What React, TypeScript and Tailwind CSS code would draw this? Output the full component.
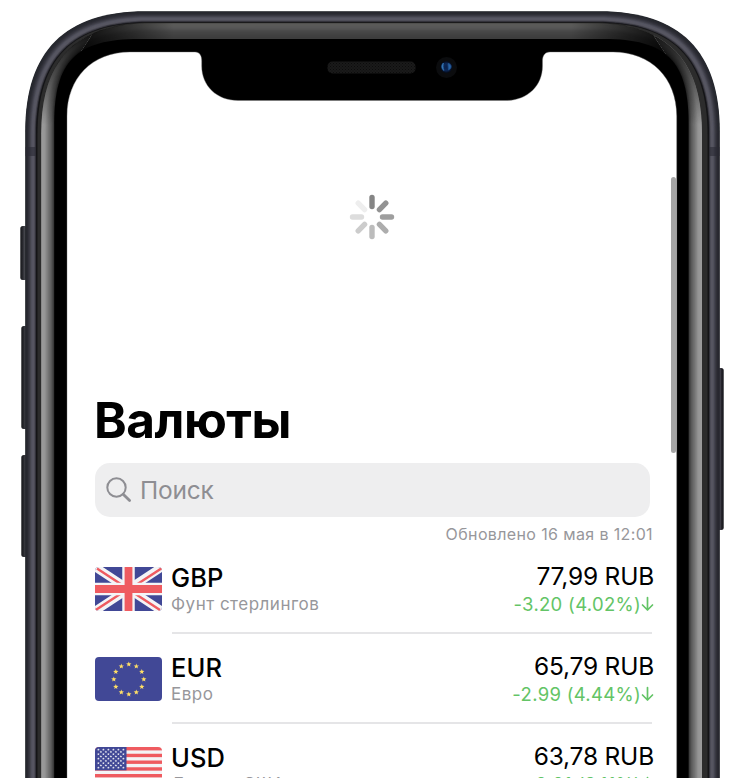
import React from "react";

type Stop = [number, number, number];

// Phone silhouette running off the bottom edge, with continuous-curvature corners.
function shell(l: number, t: number, r: number, d: number, k: number) {
  return `M${l} 800V${t + d}C${l} ${t + k} ${l + k} ${t} ${l + d} ${t}H${r - d}C${r - k} ${t} ${r} ${t + k} ${r} ${t + d}V800Z`;
}

function mix(stops: Stop[], at: number) {
  const pos = at * (stops.length - 1);
  const i = Math.min(Math.floor(pos), stops.length - 2);
  const f = pos - i;
  return `rgb(${stops[i].map((v, n) => Math.round(v + (stops[i + 1][n] - v) * f)).join(",")})`;
}

const metal: Stop[] = [[38, 40, 46], [42, 43, 50], [60, 60, 70], [86, 86, 98], [88, 87, 98], [30, 30, 36]];
const sideGlass: Stop[] = [[156, 156, 156], [150, 150, 150], [120, 120, 120], [92, 92, 92], [45, 45, 45]];
const topGlass: Stop[] = [[92, 92, 90], [88, 88, 88], [72, 72, 72], [64, 64, 64], [60, 60, 60]];

function Frame() {
  const rim = Array.from({ length: 22 }, (_, i) => i / 21);
  return (
    <svg className="absolute inset-0" width="740" height="778" viewBox="0 0 740 778" fill="none">
      <defs>
        <linearGradient id="btnL" x1="0" x2="1"><stop offset="0" stopColor="#17181b" /><stop offset=".3" stopColor="#25262b" /><stop offset=".65" stopColor="#484950" /><stop offset="1" stopColor="#1b1c21" /></linearGradient>
        <linearGradient id="btnR" x1="1" x2="0"><stop offset="0" stopColor="#15151a" /><stop offset=".3" stopColor="#24232a" /><stop offset=".6" stopColor="#55535f" /><stop offset="1" stopColor="#1b1c21" /></linearGradient>
        <linearGradient id="sideFade" gradientUnits="userSpaceOnUse" x1="0" y1="36" x2="0" y2="125"><stop offset="0" stopColor="#000" stopOpacity=".85" /><stop offset=".45" stopColor="#000" stopOpacity=".5" /><stop offset="1" stopColor="#000" stopOpacity="0" /></linearGradient>
        <linearGradient id="topFade" gradientUnits="userSpaceOnUse" x1="80" y1="0" x2="665" y2="0"><stop offset="0" stopColor="#000" stopOpacity=".9" /><stop offset=".05" stopColor="#000" stopOpacity=".62" /><stop offset=".16" stopColor="#000" stopOpacity="0" /><stop offset=".84" stopColor="#000" stopOpacity="0" /><stop offset=".95" stopColor="#000" stopOpacity=".62" /><stop offset="1" stopColor="#000" stopOpacity=".9" /></linearGradient>
        <clipPath id="sides"><path d="M0 0H110L90 38L66 75V800H0ZM740 0H635L655 38L679 75V800H740Z" /></clipPath>
        <clipPath id="top"><path d="M110 0L90 38L66 75H679L655 38L635 0Z" /></clipPath>
        <radialGradient id="lens"><stop offset="0" stopColor="#0a1f4a" /><stop offset=".55" stopColor="#0c2858" /><stop offset="1" stopColor="#050a18" /></radialGradient>
        <pattern id="mesh" width="3" height="3" patternUnits="userSpaceOnUse"><rect width="3" height="3" fill="#1a1a1a" /><rect width="1" height="1" fill="#0c0c0c" /><rect x="1.5" y="1.5" width="1" height="1" fill="#0c0c0c" /></pattern>
      </defs>
      <rect x="20.3" y="226" width="7" height="54" rx="2.5" fill="url(#btnL)" />
      <rect x="21.3" y="326" width="7" height="103" rx="2.5" fill="url(#btnL)" />
      <rect x="21.3" y="455" width="7" height="102" rx="2.5" fill="url(#btnL)" />
      <rect x="716.5" y="368" width="7.2" height="162" rx="2.5" fill="url(#btnR)" />
      {rim.map((f) => (
        <path key={f} d={shell(25.2 + f * 10.8, 11.3 + f * 10.8, 719.8 - f * 10.8, 120 - f * 6, 40 - f * 4)} fill={mix(metal, f)} />
      ))}
      <path d="M25.4 147h10.4v9H25.4zM709 147h10.6v9H709z" fill="#292a33" opacity=".6" />
      <path d={shell(36, 22, 709, 114, 36)} fill="#141416" />
      <path d={shell(37.5, 22.8, 707.5, 112, 35)} fill="#2c2c2c" />
      <g clipPath="url(#sides)">
        {rim.map((f) => (
          <path key={f} d={shell(41.2 + f * 13, 23.2 + f * 16, 702 - f * 13.4, 110 - f * 25, 36 - f * 14)} fill={mix(sideGlass, f)} />
        ))}
        <path d={shell(41, 23, 702, 110, 36)} fill="url(#sideFade)" />
      </g>
      <g clipPath="url(#top)">
        {rim.map((f) => (
          <path key={f} d={shell(41.2 + f * 13, 23.2 + f * 16, 702 - f * 13.4, 110 - f * 25, 36 - f * 14)} fill={mix(topGlass, f)} />
        ))}
        <path d={shell(41, 23, 702, 110, 36)} fill="url(#topFade)" />
      </g>
      <path d={shell(54.2, 39, 688.6, 85, 22)} fill="#000" />
      <path d="M67 800V116C67 78 92 52 130 52H195C200 52 201.700 56 201.700 61V66C201.700 86 217 100.500 238 100.500H506C527 100.500 542.500 86 542.500 66V61C542.500 56 544.500 52 550 52H613C651 52 676.700 78 676.700 116V800Z" fill="#fff" stroke="#777" strokeWidth=".4" />
      <rect x="327.500" y="61.500" width="88" height="12" rx="5" fill="url(#mesh)" />
      <circle cx="446.500" cy="67.500" r="10.500" fill="#0b0c0e" />
      <circle cx="446.300" cy="67" r="6" fill="url(#lens)" />
      <path d="M443.500 63C441 65 441.500 69 444 70.500C442.800 68 442.800 65.500 443.500 63Z" fill="#3d84c0" stroke="#2d6aa8" strokeWidth=".8" />
      <path d="M448 63.500C452 64 452 68.500 448.500 70Z" fill="#2863a5" stroke="#1f4f88" strokeWidth=".8" />
    </svg>
  );
}

const spokes = ["#858585", "#939393", "#9e9e9e", "#adadad", "#bcbcbc", "#cccccc", "#dddddd", "#eeeeee"];

function Spinner() {
  return (
    <svg className="mx-auto block" width="46" height="46" viewBox="-23 -23 46 46">
      {spokes.map((c, i) => (
        <path key={c} d="M0-19.500V-10.500" stroke={c} strokeWidth="5.400" strokeLinecap="round" transform={`rotate(${i * 45})`} />
      ))}
    </svg>
  );
}

function UkFlag() {
  return (
    <svg className="h-[44px] w-[67px] rounded-[4px]" viewBox="0 0 67 44" preserveAspectRatio="none">
      <rect width="67" height="44" fill="#414896" />
      <path d="M0 0L67 44M67 0L0 44" stroke="#f4f4f6" strokeWidth="8.500" />
      <path d="M2 1.500L28 18.500M67 1L41 18M0 43.500L26 26.500M65 43L39 26" stroke="#ef5b60" strokeWidth="2.400" />
      <path d="M33.500 0V44M0 22H67" stroke="#f4f4f6" strokeWidth="12.500" />
      <path d="M33.500 0V44M0 22H67" stroke="#ef5b60" strokeWidth="7.800" />
    </svg>
  );
}

const star = Array.from({ length: 10 }, (_, i) => {
  const r = i % 2 ? 1.15 : 2.8;
  const a = (i * Math.PI) / 5;
  return `${(Math.sin(a) * r).toFixed(2)},${(-Math.cos(a) * r).toFixed(2)}`;
}).join(" ");

function EuFlag() {
  return (
    <svg className="h-[44px] w-[67px] rounded-[4px]" viewBox="0 0 67 44">
      <rect width="67" height="44" fill="#414896" />
      {Array.from({ length: 12 }, (_, i) => {
        const a = (i * Math.PI) / 6;
        return <polygon key={i} points={star} fill="#ffdf66" transform={`translate(${33.8 + Math.sin(a) * 15} ${22.3 - Math.cos(a) * 15})`} />;
      })}
    </svg>
  );
}

function UsFlag() {
  return (
    <svg className="h-[44px] w-[67px] rounded-[4px]" viewBox="0 0 67 44">
      <rect width="67" height="44" fill="#f4f4f6" />
      {Array.from({ length: 7 }, (_, i) => (
        <rect key={i} y={i * 6.75} width="67" height="3.400" fill="#ef5b60" />
      ))}
      <rect width="31.500" height="23.300" fill="#414896" />
      {Array.from({ length: 9 }, (_, r) =>
        Array.from({ length: r % 2 ? 5 : 6 }, (_, c) => (
          <polygon key={`${r}-${c}`} points={star} fill="#f4f4f6" transform={`translate(${(r % 2 ? 5.9 : 3.4) + c * 5} ${2.7 + r * 2.25}) scale(.5)`} />
        )),
      )}
    </svg>
  );
}

const rows = [
  { code: "GBP", name: "Фунт стерлингов", rate: "77,99 RUB", delta: "-3.20 (4.02%)", Flag: UkFlag },
  { code: "EUR", name: "Евро", rate: "65,79 RUB", delta: "-2.99 (4.44%)", Flag: EuFlag },
  { code: "USD", name: "Доллар США", rate: "63,78 RUB", delta: "-2.01 (3.11%)", Flag: UsFlag },
];

export default function App() {
  return (
    <div className="relative h-[778px] w-[740px] overflow-hidden bg-white font-['Inter',sans-serif]">
      <Frame />
      <div className="absolute left-[671px] top-[177px] h-[276px] w-[5px] rounded-full bg-[#a6a6a6]" />
      <main className="relative ml-[67px] h-[778px] w-[610px] overflow-hidden pl-7 pt-[194px]">
        <div className="w-[555px] pr-px">
          <Spinner />
        </div>
        <h1 className="-ml-px mt-[150px] h-[60px] whitespace-nowrap text-[49.500px] font-bold leading-[60px] tracking-[-0.500px] text-black">Валюты</h1>
        <div className="mt-[13px] flex h-[54px] w-[555px] items-center rounded-[15px] bg-[#eeeeef] pl-[11px] text-[#8e8e93]">
          <svg width="26" height="26" viewBox="0 0 26 26" fill="none" stroke="currentColor">
            <circle cx="10.500" cy="10.500" r="9.200" strokeWidth="2" />
            <path d="M17.200 17.200L23.600 23.600" strokeWidth="2.800" strokeLinecap="round" />
          </svg>
          <span className="ml-2 text-[24.500px] leading-none tracking-[-0.200px]">Поиск</span>
        </div>
        <p className="mt-[7px] w-[558px] text-right text-[16px] leading-[20px] tracking-[0.370px] text-[#97979b]">Обновлено 16 мая в 12:01</p>
        <ul className="mt-[9px]">
          {rows.map(({ code, name, rate, delta, Flag }) => (
            <li key={code} className="flex h-[90px]">
              <div className="w-[77px] pt-[14px]">
                <Flag />
              </div>
              <div className="flex h-[81px] w-[480px] justify-between border-b-2 border-[#e5e5e7] pt-[10px]">
                <div className="-ml-px whitespace-nowrap">
                  <div className="text-[25.500px] font-medium leading-[30px] tracking-[0.100px] text-black">{code}</div>
                  <div className="text-[17px] leading-[22px] tracking-[0.500px] text-[#97979b]">{name}</div>
                </div>
                <div className="-mr-[2px] -mt-[2px] whitespace-nowrap text-right">
                  <div className="text-[24.500px] leading-[30px] tracking-[-0.200px] text-black">{rate}</div>
                  <div className="flex items-center justify-end pt-px text-[18.500px] leading-[24px] tracking-[0.300px] text-[#63c466]">
                    {delta}
                    <svg width="13" height="16" viewBox="0 0 13 16" fill="none" stroke="currentColor" strokeWidth="1.700" strokeLinecap="round" strokeLinejoin="round">
                      <path d="M6.500 1.500V14M1.500 9L6.500 14L11.500 9" />
                    </svg>
                  </div>
                </div>
              </div>
            </li>
          ))}
        </ul>
      </main>
    </div>
  );
}
